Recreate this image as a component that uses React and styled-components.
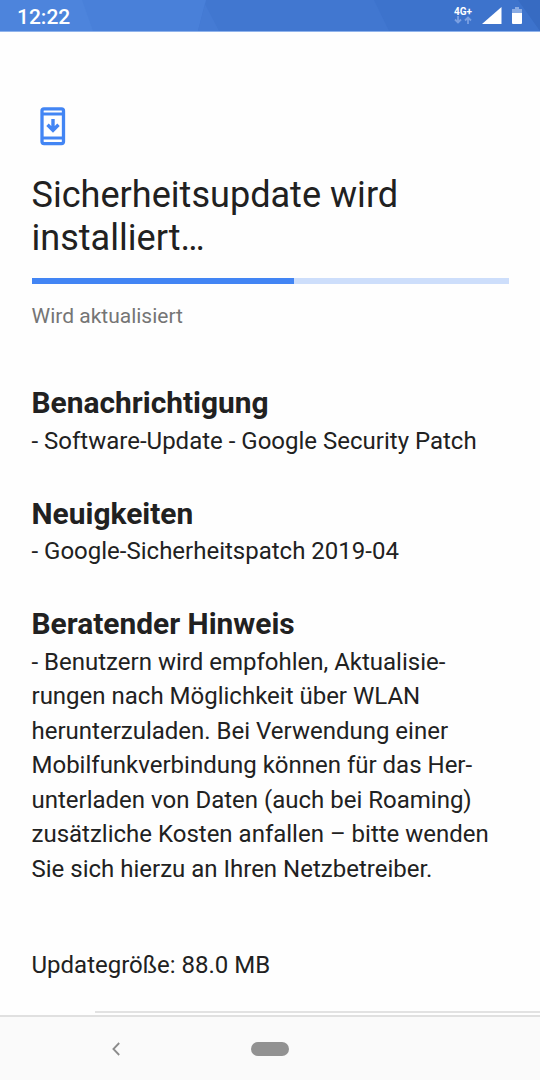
import React from "react";
import styled, { createGlobalStyle } from "styled-components";

const GlobalStyle = createGlobalStyle`
  * {
    box-sizing: border-box;
  }

  body {
    margin: 0;
    background: #fefefe;
    font-family: Roboto, "Liberation Sans", sans-serif;
    color: #212121;
  }
`;

const Screen = styled.div`
  display: flex;
  flex-direction: column;
  width: 540px;
  height: 1080px;
  overflow: hidden;
`;

const StatusBar = styled.header`
  position: relative;
  display: flex;
  align-items: center;
  justify-content: space-between;
  height: 32px;
  padding: 0 18px 0 17px;
  border-bottom: 1px solid #8fb3ec;
  color: #fff;
`;

const Backdrop = styled.svg`
  position: absolute;
  top: 0;
  left: 0;
  z-index: -1;
`;

const Clock = styled.span`
  font-size: 21px;
  font-weight: 500;
  line-height: 31px;
  padding-top: 3px;
`;

const StatusIcons = styled.div`
  display: flex;
  align-items: flex-start;
  height: 31px;
  padding-top: 7px;
`;

const Network = styled.div`
  display: flex;
  flex-direction: column;
  align-items: center;
  width: 20px;
  margin-right: 9px;

  span {
    font-size: 10px;
    font-weight: 700;
    line-height: 9px;
  }
`;

const Content = styled.main`
  display: flex;
  flex-direction: column;
  flex: 1;
  padding: 74px 31.5px 0;
`;

const Title = styled.h1`
  margin: 28px 0 0;
  font-size: 36.1px;
  font-weight: 400;
  line-height: 43px;
`;

const Track = styled.div`
  height: 5.5px;
  margin-top: 18px;
  background: #cddefb;
`;

const Progress = styled.div`
  height: 100%;
  background: #4285f4;
`;

const Status = styled.p`
  margin: 20px 0 0;
  font-size: 21px;
  line-height: 25px;
  color: #757575;
`;

const Notes = styled.div`
  display: flex;
  flex-direction: column;
  gap: 36.5px;
  margin-top: 55.5px;
`;

const Heading = styled.h2`
  margin: 0 0 1px;
  font-size: 29.9px;
  font-weight: 700;
  line-height: 38.5px;
`;

const Line = styled.span`
  display: block;
  font-size: 24px;
  line-height: 34.5px;
  white-space: nowrap;
`;

const Size = styled.p`
  margin: 61.5px 0 0;
`;

const Divider = styled.div`
  height: 2px;
  margin: auto -31.5px 2px 63.5px;
  background: #e2e2e2;
`;

const NavBar = styled.nav`
  display: grid;
  grid-template-columns: 232px 76px 232px;
  align-items: center;
  justify-items: center;
  height: 65px;
  border-top: 2px solid #e0e0e0;
  background: #fafafa;
`;

const Home = styled.div`
  width: 38px;
  height: 14px;
  border-radius: 7px;
  background: #929292;
`;

const StatusBackdrop = () => (
  <Backdrop width="540" height="31" viewBox="0 0 540 31">
    <path d="M0 0h540v31H0z" fill="#4177d0" />
    <path d="M0 0h206l-8 31H0z" fill="#4980d9" />
    <path d="M0 0h82l11 31H0z" fill="#4d84dc" />
    <path d="M205 4l14 27h-21z" fill="#457bd4" />
    <path d="M374 0h166v31H389z" fill="#3d73cc" />
    <path d="M518 0h22v31z" fill="#376bc2" />
  </Backdrop>
);

const UpdateIcon = () => (
  <svg width="42" height="40" viewBox="0 0 42 40" fill="none" stroke="#4285f4">
    <rect x="10" y="2.800" width="21.500" height="34.800" rx="2" strokeWidth="3.300" />
    <path d="M10 8H31M10 32H31" strokeWidth="3" />
    <path d="M21 13v11M15.500 18.800l5.500 5.500 5.500-5.500" strokeWidth="3.400" />
  </svg>
);

const DataArrows = () => (
  <svg width="18" height="8" viewBox="0 0 18 8" fill="none" stroke="#7ba0e2" strokeWidth="1.8">
    <path d="M4 0v6M1 3.500l3 3 3-3M14 8V2M11 4.500l3-3 3 3" />
  </svg>
);

const SignalIcon = () => (
  <svg width="20" height="17" viewBox="0 0 20 17">
    <path d="M0 17L19.500 0V17z" fill="#fff" />
  </svg>
);

const BatteryIcon = () => (
  <svg width="20" height="17" viewBox="-10 0 20 17">
    <path d="M3 0h4v2h3v4H0V2h3z" fill="#8aace4" />
    <path d="M0 6h10v10a1 1 0 0 1-1 1H1a1 1 0 0 1-1-1z" fill="#fff" />
  </svg>
);

const BackIcon = () => (
  <svg width="8" height="14" viewBox="0 0 8 14" fill="none" stroke="#8b8b8b" strokeWidth="1.8">
    <path d="M7.200 1L1.400 7l5.800 6" />
  </svg>
);

const notes = [
  {
    title: "Benachrichtigung",
    lines: ["- Software-Update - Google Security Patch"]
  },
  {
    title: "Neuigkeiten",
    lines: ["- Google-Sicherheitspatch 2019-04"]
  },
  {
    title: "Beratender Hinweis",
    lines: [
      "- Benutzern wird empfohlen, Aktualisie-",
      "rungen nach Möglichkeit über WLAN",
      "herunterzuladen. Bei Verwendung einer",
      "Mobilfunkverbindung können für das Her-",
      "unterladen von Daten (auch bei Roaming)",
      "zusätzliche Kosten anfallen – bitte wenden",
      "Sie sich hierzu an Ihren Netzbetreiber."
    ]
  }
];

const App = () => {
  const progress = 55;

  return (
    <>
      <GlobalStyle />
      <Screen>
        <StatusBar>
          <StatusBackdrop />
          <Clock>12:22</Clock>
          <StatusIcons>
            <Network>
              <span>4G+</span>
              <DataArrows />
            </Network>
            <SignalIcon />
            <BatteryIcon />
          </StatusIcons>
        </StatusBar>
        <Content>
          <UpdateIcon />
          <Title>
            Sicherheitsupdate wird
            <br />
            installiert…
          </Title>
          <Track>
            <Progress style={{ width: `${progress}%` }} />
          </Track>
          <Status>Wird aktualisiert</Status>
          <Notes>
            {notes.map(note => (
              <section key={note.title}>
                <Heading>{note.title}</Heading>
                {note.lines.map(line => (
                  <Line key={line}>{line}</Line>
                ))}
              </section>
            ))}
          </Notes>
          <Size>
            <Line>Updategröße: 88.0 MB</Line>
          </Size>
          <Divider />
        </Content>
        <NavBar>
          <BackIcon />
          <Home />
        </NavBar>
      </Screen>
    </>
  );
};

export default App;
